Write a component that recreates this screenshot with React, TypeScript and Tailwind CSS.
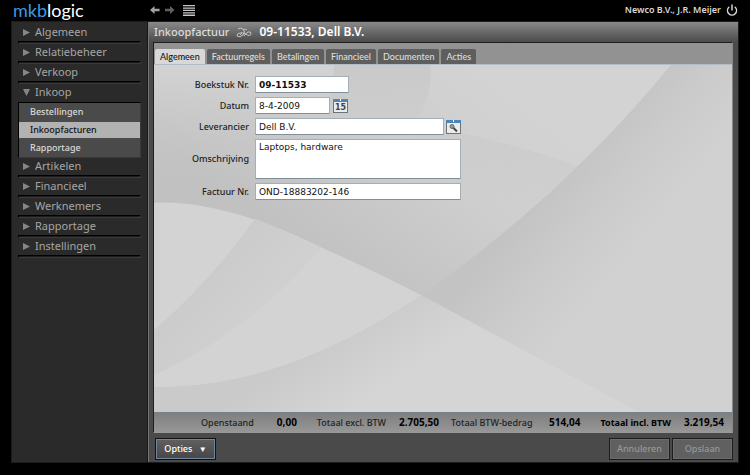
import { Power } from 'lucide-react';

type MenuItem = {
  label: string;
  children?: string[];
};

const menu: MenuItem[] = [
  { label: 'Algemeen' },
  { label: 'Relatiebeheer' },
  { label: 'Verkoop' },
  { label: 'Inkoop', children: ['Bestellingen', 'Inkoopfacturen', 'Rapportage'] },
  { label: 'Artikelen' },
  { label: 'Financieel' },
  { label: 'Werknemers' },
  { label: 'Rapportage' },
  { label: 'Instellingen' },
];

const tabs = ['Algemeen', 'Factuurregels', 'Betalingen', 'Financieel', 'Documenten', 'Acties'];

const inputClass =
  'block border border-[#a3afb8] border-b-[#7f909c] bg-white px-[3px] font-["DejaVu_Sans",sans-serif] text-[9px] leading-[14px] text-[#111] outline-none rounded-[1px]';

const labelClass = 'text-right text-[9px] leading-4 font-medium text-[#222]';

function TopBar() {
  return (
    <header className="flex h-[21px] items-center pr-3 pb-px pl-[13px]">
      <a href="#" className="w-[137px] font-['Lato',sans-serif] text-[18px] leading-5 text-white">
        <span className="text-[#3d9be0]">mkb</span>logic
      </a>
      <nav className="flex flex-1 items-center gap-[5px]">
        <button aria-label="Vorige">
          <svg width="10" height="10" viewBox="0 0 11 10" fill="#a2a2a2">
            <path d="M0 5 5 0.5V3.5H10.5V6.5H5V9.5Z" />
          </svg>
        </button>
        <button aria-label="Volgende">
          <svg width="10" height="10" viewBox="0 0 11 10" fill="#606060">
            <path d="M10.5 5 5.5 0.5V3.5H0V6.5H5.5V9.5Z" />
          </svg>
        </button>
        <button aria-label="Menu" className="ml-[3px]">
          <svg width="12" height="11" viewBox="0 0 12 11" fill="#c8c8c8">
            <path d="M0 0H12V1.3H0ZM0 2.4H12V3.7H0ZM0 4.8H12V6.1H0ZM0 7.2H12V8.5H0ZM0 9.6H12V11H0Z" />
          </svg>
        </button>
      </nav>
      <span className="mr-[5px] text-[9px] font-semibold text-[#d8d8d8]">Newco B.V., J.R. Meijer</span>
      <button aria-label="Afmelden">
        <Power size={12} strokeWidth={3} color="#d4d4d4" />
      </button>
    </header>
  );
}

function Divider() {
  return <div className="h-[3px] border border-black border-r-[#3a3a3a] border-b-[#3a3a3a] bg-[#1b1b1b]" />;
}

function Sidebar() {
  return (
    <aside className="w-[136px] shrink-0 border-r border-[#161616] bg-[#2a2a2a] px-[6px] pt-[2px]">
      {menu.map((item) => (
        <div key={item.label}>
          <button className="flex h-[17px] w-full items-center gap-[5px] pb-px pl-[5px] text-[11px] leading-4 text-[#a6a6a6]">
            <svg width="7" height="7" viewBox="0 0 7 7" fill="#868686">
              <path d={item.children ? 'M0 0H7L3.5 7Z' : 'M0 0L7 3.5L0 7Z'} />
            </svg>
            {item.label}
          </button>
          {item.children ? (
            <ul className="mt-px border border-black border-r-[#3a3a3a] border-b-[#3a3a3a] bg-[#4a4a4a] text-[9px] leading-4 font-medium text-[#dadada]">
              {item.children.map((child) => (
                <li key={child} className="py-px">
                  <a
                    href="#"
                    className={
                      child === 'Inkoopfacturen'
                        ? 'block bg-[#b2b2b2] pl-[11px] text-[#111]'
                        : 'block pl-[11px]'
                    }
                  >
                    {child}
                  </a>
                </li>
              ))}
            </ul>
          ) : (
            <Divider />
          )}
        </div>
      ))}
    </aside>
  );
}

function Swirl() {
  return (
    <svg
      className="absolute inset-0 h-full w-full"
      viewBox="0 0 577 348"
      preserveAspectRatio="none"
      aria-hidden="true"
    >
      <defs>
        <linearGradient id="base" gradientUnits="userSpaceOnUse" x1="350" y1="20" x2="200" y2="220">
          <stop offset="0" stopColor="#d3d3d3" />
          <stop offset="0.45" stopColor="#cecece" />
          <stop offset="1" stopColor="#c1c1c1" />
        </linearGradient>
        <linearGradient id="corner" gradientUnits="userSpaceOnUse" x1="0" y1="0" x2="0" y2="130">
          <stop offset="0" stopColor="#d3d3d3" />
          <stop offset="1" stopColor="#c2c2c2" stopOpacity="0" />
        </linearGradient>
        <linearGradient id="right" gradientUnits="userSpaceOnUse" x1="380" y1="135" x2="465" y2="205">
          <stop offset="0" stopColor="#c3c3c3" />
          <stop offset="0.5" stopColor="#cbcbcb" />
          <stop offset="1" stopColor="#d1d1d1" />
        </linearGradient>
        <linearGradient id="middle" gradientUnits="userSpaceOnUse" x1="360" y1="80" x2="345" y2="140">
          <stop offset="0" stopColor="#c6c6c6" stopOpacity="0.4" />
          <stop offset="1" stopColor="#c6c6c6" stopOpacity="0" />
        </linearGradient>
        <linearGradient id="bottom" gradientUnits="userSpaceOnUse" x1="150" y1="290" x2="190" y2="350">
          <stop offset="0" stopColor="#cacaca" />
          <stop offset="1" stopColor="#d5d5d5" />
        </linearGradient>
        <linearGradient id="band" gradientUnits="userSpaceOnUse" x1="60" y1="200" x2="105" y2="240">
          <stop offset="0" stopColor="#cbcbcb" />
          <stop offset="1" stopColor="#d0d0d0" />
        </linearGradient>
        <linearGradient id="arc" gradientUnits="userSpaceOnUse" x1="220" y1="0" x2="220" y2="90">
          <stop offset="0" stopColor="#c9c9c9" />
          <stop offset="1" stopColor="#cbcbcb" stopOpacity="0" />
        </linearGradient>
      </defs>
      <rect width="577" height="348" fill="url(#base)" />
      <path d="M0 0H180Q178 60 140 120L0 138Z" fill="url(#corner)" />
      <path d="M180 0H276Q280 40 240 95H150Q177 50 180 0Z" fill="url(#arc)" />
      <path d="M263 60Q350 75 425 102L267 231L240 150Z" fill="url(#middle)" />
      <path d="M516 0H577V348H485L267 231Q410 130 516 0Z" fill="url(#right)" />
      <path d="M0 138C60 136 120 160 167 183Q215 204 267 231C180 290 90 325 0 323Z" fill="#d3d3d3" />
      <path d="M101 154L167 183C120 240 60 285 0 311V266Q58 215 101 154Z" fill="url(#band)" />
      <path d="M267 231L485 348H0V323C90 325 180 290 267 231Z" fill="url(#bottom)" />
    </svg>
  );
}

function IconButton({ label, children }: { label: string; children: React.ReactNode }) {
  return (
    <button type="button" aria-label={label}>
      <svg width="15" height="14" viewBox="0 0 15 14">
        <rect x="0.5" y="0.5" width="14" height="13" fill="#ececec" stroke="#6b737b" />
        <rect x="0" y="0" width="15" height="3" fill="#4a86b8" />
        <rect x="7" y="0" width="1" height="2" fill="#fff" />
        {children}
      </svg>
    </button>
  );
}

function InvoiceForm() {
  return (
    <form className="relative grid grid-cols-[95px_206px] content-start items-center gap-x-[6px] gap-y-1 pt-[11px]">
      <label htmlFor="boekstuk" className={labelClass}>Boekstuk Nr.</label>
      <input id="boekstuk" defaultValue="09-11533" className={`${inputClass} h-[17px] w-[94px] font-bold`} />

      <label htmlFor="datum" className={labelClass}>Datum</label>
      <div className="flex items-center gap-[3px]">
        <input id="datum" defaultValue="8-4-2009" className={`${inputClass} h-[17px] w-[75px]`} />
        <IconButton label="Kies datum">
          <text x="7.5" y="11" textAnchor="middle" fontSize="8" fontWeight="700" fontFamily="DejaVu Sans" fill="#444">15</text>
        </IconButton>
      </div>

      <label htmlFor="leverancier" className={labelClass}>Leverancier</label>
      <div className="flex items-center gap-[2px]">
        <input id="leverancier" defaultValue="Dell B.V." className={`${inputClass} h-[17px] min-w-0 flex-1`} />
        <IconButton label="Zoek leverancier">
          <circle cx="6" cy="6.5" r="2" fill="#999" stroke="#666" />
          <path d="M7.5 8L11 11.5" stroke="#444" strokeWidth="2" />
        </IconButton>
      </div>

      <label htmlFor="omschrijving" className={labelClass}>Omschrijving</label>
      <textarea id="omschrijving" defaultValue="Laptops, hardware" className={`${inputClass} h-10 w-full resize-none`} />

      <label htmlFor="factuur" className={labelClass}>Factuur Nr.</label>
      <input id="factuur" defaultValue="OND-18883202-146" className={`${inputClass} h-[17px] w-full`} />
    </form>
  );
}

function Totals() {
  return (
    <dl className="flex h-5 items-center justify-end border-t border-[#75818b] bg-linear-to-b from-[#7f7f7f] to-[#979797] pr-2 text-[9px] font-medium text-[#222]">
      <dt>Openstaand</dt>
      <dd className="w-[43px] text-right text-[10px] font-bold text-black">0,00</dd>
      <dt className="ml-5">Totaal excl. BTW</dt>
      <dd className="w-[53px] text-right text-[10px] font-bold text-black">2.705,50</dd>
      <dt className="ml-3">Totaal BTW-bedrag</dt>
      <dd className="w-12 text-right text-[10px] font-bold text-black">514,04</dd>
      <dt className="ml-5 font-bold text-black">Totaal incl. BTW</dt>
      <dd className="w-[53px] text-right text-[10px] font-bold text-black">3.219,54</dd>
    </dl>
  );
}

export default function App() {
  return (
    <div className="flex min-h-screen flex-col bg-black pb-3 font-['Noto_Sans',sans-serif]">
      <TopBar />
      <div className="mr-[11px] ml-[11px] flex flex-1 border border-[#1c1c1c] bg-[#2a2a2a]">
        <Sidebar />
        <main className="flex min-w-0 flex-1 flex-col border-l border-[#777] bg-[#4a4a4a]">
          <h1 className="flex h-5 items-center bg-linear-to-b from-[#8a8a8a] to-[#4b4b4b] pl-[5px] text-[12px] leading-5 text-[#dcdcdc]">
            <span className="text-[11px] font-medium">Inkoopfactuur</span>
            <svg className="mx-[7px]" width="16" height="11" viewBox="0 0 16 11" fill="none" stroke="#c4c4c4">
              <path d="M2 2Q5 0 7 2Q10 5 7 8Q4 11 1 9Q1 6 4 6Q6 5 10 7Q14 10 15 7Q15 4 12 5Q9 7 8 9M7 3Q9 1 11 3M4 8L6 6" />
            </svg>
            <span className="font-semibold text-white">09-11533, Dell B.V.</span>
          </h1>
          <section className="mr-[5px] ml-1 flex flex-1 flex-col border border-[#1e1e1e] border-r-[#888] border-b-[#999]">
            <div className="flex h-[21px] items-end gap-[2px] bg-[#929292] pl-px" role="tablist">
              {tabs.map((tab) => (
                <button
                  key={tab}
                  role="tab"
                  aria-selected={tab === 'Algemeen'}
                  className={
                    tab === 'Algemeen'
                      ? 'h-[15px] rounded-t-[2px] bg-[#d8d8d8] px-[5px] font-["Lato",sans-serif] text-[9px] leading-[15px] font-medium text-[#111]'
                      : 'h-[15px] rounded-t-[2px] bg-[#5e5e5e] px-[5px] font-["Lato",sans-serif] text-[9px] leading-[15px] font-medium text-[#dedede]'
                  }
                >
                  {tab}
                </button>
              ))}
            </div>
            <div className="relative flex-1 border-t border-[#b4bcc4]">
              <Swirl />
              <InvoiceForm />
            </div>
            <Totals />
          </section>
          <footer className="flex h-[29px] items-end gap-[2px] pr-[5px] pb-[2px] pl-[6px] text-[9px] font-medium">
            <button className="h-[22px] w-[61px] border border-[#111] bg-linear-to-b from-[#606060] to-[#464646] text-white shadow-[inset_0_0_0_1px_#71869b]">
              Opties <span className="ml-1 text-[8px]">▼</span>
            </button>
            <span className="flex-1" />
            <button className="h-[22px] w-[61px] border border-[#1c1c1c] bg-[#606060] text-[#979797] shadow-[inset_0_0_0_1px_#6c6c6c]">Annuleren</button>
            <button className="h-[22px] w-[61px] border border-[#1c1c1c] bg-[#606060] text-[#979797] shadow-[inset_0_0_0_1px_#6c6c6c]">Opslaan</button>
          </footer>
        </main>
      </div>
    </div>
  );
}
